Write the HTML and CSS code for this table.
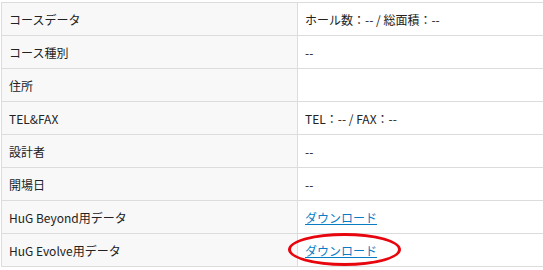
FILE: index.html
```html
<!DOCTYPE html>
<html lang="ja">
<head>
    <meta charset="UTF-8">
    <title>コース情報</title>
    <link rel="stylesheet" href="styles.css">
</head>
<body>
<div class="box">
    <table class="info">
        <tr><th>コースデータ</th><td>ホール数：-- / 総面積：--</td></tr>
        <tr><th>コース種別</th><td>--</td></tr>
        <tr><th>住所</th><td></td></tr>
        <tr><th>TEL&amp;FAX</th><td>TEL：-- / FAX：--</td></tr>
        <tr><th>設計者</th><td>--</td></tr>
        <tr><th>開場日</th><td>--</td></tr>
        <tr><th>HuG Beyond用データ</th><td><a href="#">ダウンロード</a></td></tr>
        <tr><th>HuG Evolve用データ</th><td><span class="mark"><a href="#">ダウンロード</a></span></td></tr>
    </table>
</div>
</body>
</html>
```

FILE: styles.css
```css
*{
    margin: 0;
    padding: 0;
}
body{
    font-family: "Noto Sans CJK JP", "Noto Sans", sans-serif;
    font-size: 12px;
    color: #222;
    background: #fff;
}
.box{
    padding: 2px 0 0 1px;
}
.info{
    width: 560px;
    border-collapse: collapse;
}
.info th,
.info td{
    height: 32px;
    border: 1px solid #dcdcdc;
    padding: 0 7px;
    text-align: left;
    font-weight: normal;
    vertical-align: middle;
}
.info th{
    width: 281px;
    background-color: #f8f8f8;
}
.info td{
    background-color: #fff;
}
.info a{
    color: #0a7cc4;
}
/* 赤丸の強調 */
.mark{
    position: relative;
    display: inline-block;
}
.mark::after{
    content: "";
    position: absolute;
    left: -17px;
    top: -9px;
    width: 107px;
    height: 27px;
    border: 3px solid #e8060e;
    border-radius: 50%;
}
```
